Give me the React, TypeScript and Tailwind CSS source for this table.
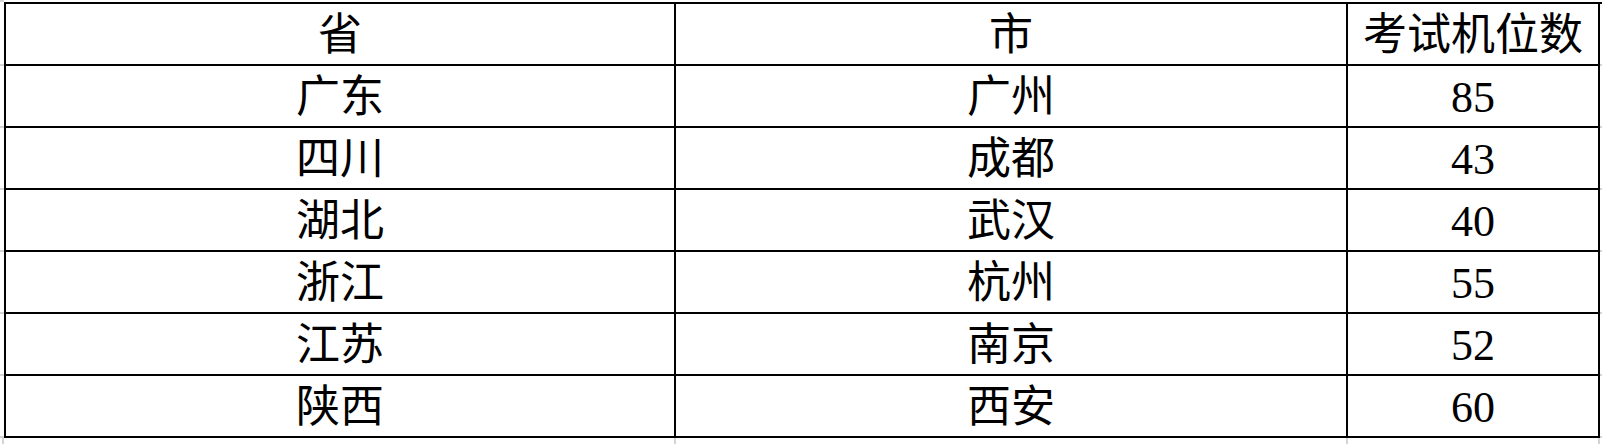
const rows: [string, string, string][] = [
  ["广东", "广州", "85"],
  ["四川", "成都", "43"],
  ["湖北", "武汉", "40"],
  ["浙江", "杭州", "55"],
  ["江苏", "南京", "52"],
  ["陕西", "西安", "60"],
];

const font = { fontFamily: '"Liberation Serif", "Noto Sans CJK SC", serif' };

function Row({ cells, first }: { cells: string[]; first?: boolean }) {
  return (
    <div className="flex h-[62px]">
      <div className="w-[4px] shrink-0 border-b-2 border-[#d4d4d4]" />
      <div
        className={`flex border-b-2 border-l-2 border-black ${first ? "" : ""}`}
      >
        {cells.map((c, i) => (
          <div
            key={i}
            className={`flex items-center justify-center border-r-2 border-black text-[44px] leading-none text-black pt-[4px] ${
              i === 0 ? "w-[670px]" : i === 1 ? "w-[672px]" : "w-[252px]"
            }`}
          >
            {c}
          </div>
        ))}
      </div>
      <div className="w-[2px] shrink-0 border-b-2 border-[#d4d4d4]" />
    </div>
  );
}

export default function App() {
  return (
    <div className="w-[1604px] h-[444px] bg-white overflow-hidden" style={font}>
      <div className="flex h-[2px]">
        <div className="w-[4px] bg-[#d4d4d4]" />
        <div className="w-[1598px]" />
      </div>
      <div className="ml-[4px] w-[1598px] h-[2px] bg-black" />
      <Row cells={["省", "市", "考试机位数"]} first />
      {rows.map((r, i) => (
        <Row key={i} cells={r} />
      ))}
      <div className="flex h-[8px]">
        <div className="w-[4px] border-r-2 border-[#d4d4d4]" />
        <div className="w-[672px] border-r-2 border-[#d4d4d4]" />
        <div className="w-[672px] border-r-2 border-[#d4d4d4]" />
        <div className="w-[252px] border-r-2 border-[#d4d4d4]" />
      </div>
    </div>
  );
}
